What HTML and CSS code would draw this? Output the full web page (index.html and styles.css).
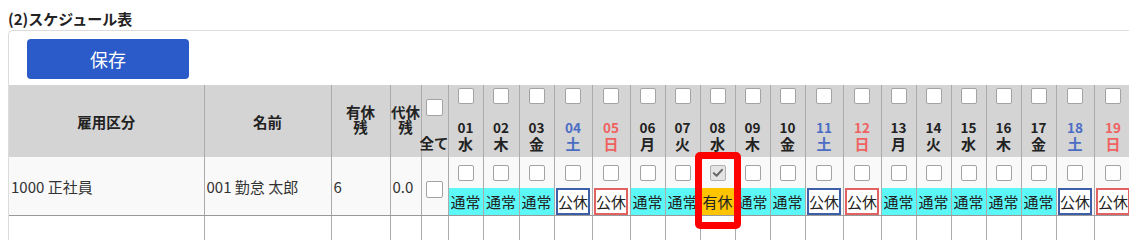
FILE: index.html
```html
<!DOCTYPE html>
<html lang="ja">
<head>
<meta charset="utf-8">
<title>スケジュール表</title>
<link rel="stylesheet" href="styles.css">
</head>
<body>
<h2 class="title">(2)スケジュール表</h2>
<div class="card">
  <div class="toolbar"><button class="btn-save" type="button">保存</button></div>
  <table class="sched">
    <colgroup>
      <col class="w-kbn"><col class="w-name"><col class="w-yk"><col class="w-dk"><col class="w-all">
      <col class="w35"><col class="w36"><col class="w35"><col class="w38"><col class="w38">
      <col class="w35"><col class="w35"><col class="w35"><col class="w35"><col class="w35">
      <col class="w38"><col class="w38"><col class="w35"><col class="w35"><col class="w35">
      <col class="w35"><col class="w35"><col class="w38"><col class="w38"><col class="w35"><col class="w35">
    </colgroup>
    <thead>
      <tr class="head">
        <th>雇用区分</th>
        <th>名前</th>
        <th class="two">有休<br>残</th>
        <th class="two">代休<br>残</th>
        <th class="allh"><div class="in"><span class="cb lg"></span><span class="allt">全て</span></div></th>
        <th class="dh"><div class="in"><span class="cb"></span><span class="num">01</span><span class="wd">水</span></div></th>
        <th class="dh"><div class="in"><span class="cb"></span><span class="num">02</span><span class="wd">木</span></div></th>
        <th class="dh"><div class="in"><span class="cb"></span><span class="num">03</span><span class="wd">金</span></div></th>
        <th class="dh sat"><div class="in"><span class="cb"></span><span class="num">04</span><span class="wd">土</span></div></th>
        <th class="dh sun"><div class="in"><span class="cb"></span><span class="num">05</span><span class="wd">日</span></div></th>
        <th class="dh"><div class="in"><span class="cb"></span><span class="num">06</span><span class="wd">月</span></div></th>
        <th class="dh"><div class="in"><span class="cb"></span><span class="num">07</span><span class="wd">火</span></div></th>
        <th class="dh"><div class="in"><span class="cb"></span><span class="num">08</span><span class="wd">水</span></div></th>
        <th class="dh"><div class="in"><span class="cb"></span><span class="num">09</span><span class="wd">木</span></div></th>
        <th class="dh"><div class="in"><span class="cb"></span><span class="num">10</span><span class="wd">金</span></div></th>
        <th class="dh sat"><div class="in"><span class="cb"></span><span class="num">11</span><span class="wd">土</span></div></th>
        <th class="dh sun"><div class="in"><span class="cb"></span><span class="num">12</span><span class="wd">日</span></div></th>
        <th class="dh"><div class="in"><span class="cb"></span><span class="num">13</span><span class="wd">月</span></div></th>
        <th class="dh"><div class="in"><span class="cb"></span><span class="num">14</span><span class="wd">火</span></div></th>
        <th class="dh"><div class="in"><span class="cb"></span><span class="num">15</span><span class="wd">水</span></div></th>
        <th class="dh"><div class="in"><span class="cb"></span><span class="num">16</span><span class="wd">木</span></div></th>
        <th class="dh"><div class="in"><span class="cb"></span><span class="num">17</span><span class="wd">金</span></div></th>
        <th class="dh sat"><div class="in"><span class="cb"></span><span class="num">18</span><span class="wd">土</span></div></th>
        <th class="dh sun"><div class="in"><span class="cb"></span><span class="num">19</span><span class="wd">日</span></div></th>
        <th class="dh"><div class="in"><span class="cb"></span><span class="num">20</span><span class="wd">月</span></div></th>
        <th class="dh"><div class="in"><span class="cb"></span><span class="num">21</span><span class="wd">火</span></div></th>
      </tr>
    </thead>
    <tbody>
      <tr class="row">
        <td class="txt">1000 正社員</td>
        <td class="txt">001 勤怠 太郎</td>
        <td class="txt">6</td>
        <td class="txt">0.0</td>
        <td class="allc"><span class="cb lg"></span></td>
        <td class="dc"><div class="in"><span class="cb"></span><span class="lbl nrm">通常</span></div></td>
        <td class="dc"><div class="in"><span class="cb"></span><span class="lbl nrm">通常</span></div></td>
        <td class="dc"><div class="in"><span class="cb"></span><span class="lbl nrm">通常</span></div></td>
        <td class="dc"><div class="in"><span class="cb"></span><span class="lbl hsat">公休</span></div></td>
        <td class="dc"><div class="in"><span class="cb"></span><span class="lbl hsun">公休</span></div></td>
        <td class="dc"><div class="in"><span class="cb"></span><span class="lbl nrm">通常</span></div></td>
        <td class="dc"><div class="in"><span class="cb"></span><span class="lbl nrm">通常</span></div></td>
        <td class="dc hl"><div class="in"><span class="cb on"><svg viewBox="0 0 16 16" width="14" height="14"><path d="M3.2 8.2 L6.4 11.2 L12.6 4.4" fill="none" stroke="#6a6a6a" stroke-width="2.4" stroke-linecap="round" stroke-linejoin="round"/></svg></span><span class="lbl paid">有休</span></div></td>
        <td class="dc"><div class="in"><span class="cb"></span><span class="lbl nrm">通常</span></div></td>
        <td class="dc"><div class="in"><span class="cb"></span><span class="lbl nrm">通常</span></div></td>
        <td class="dc"><div class="in"><span class="cb"></span><span class="lbl hsat">公休</span></div></td>
        <td class="dc"><div class="in"><span class="cb"></span><span class="lbl hsun">公休</span></div></td>
        <td class="dc"><div class="in"><span class="cb"></span><span class="lbl nrm">通常</span></div></td>
        <td class="dc"><div class="in"><span class="cb"></span><span class="lbl nrm">通常</span></div></td>
        <td class="dc"><div class="in"><span class="cb"></span><span class="lbl nrm">通常</span></div></td>
        <td class="dc"><div class="in"><span class="cb"></span><span class="lbl nrm">通常</span></div></td>
        <td class="dc"><div class="in"><span class="cb"></span><span class="lbl nrm">通常</span></div></td>
        <td class="dc"><div class="in"><span class="cb"></span><span class="lbl hsat">公休</span></div></td>
        <td class="dc"><div class="in"><span class="cb"></span><span class="lbl hsun">公休</span></div></td>
        <td class="dc"><div class="in"><span class="cb"></span><span class="lbl nrm">通常</span></div></td>
        <td class="dc"><div class="in"><span class="cb"></span><span class="lbl nrm">通常</span></div></td>
      </tr>
      <tr class="row2">
        <td></td><td></td><td></td><td></td><td></td>
        <td></td><td></td><td></td><td></td><td></td><td></td><td></td><td></td><td></td><td></td>
        <td></td><td></td><td></td><td></td><td></td><td></td><td></td><td></td><td></td><td></td><td></td>
      </tr>
    </tbody>
  </table>
</div>
</body>
</html>
```
FILE: styles.css
```css
html, body {
  background: #fff;
}
body {
  margin: 8px;
  font-family: "Noto Sans CJK JP", "Noto Sans", sans-serif;
  color: #222;
}
.title {
  margin: 0;
  height: 22px;
  font-size: 15px;
  line-height: 22px;
  font-weight: bold;
  color: #222;
}
.card {
  width: max-content;
  border: 1px solid #dcdcdc;
  border-right: 0;
  border-bottom: 0;
  border-radius: 5px 0 0 0;
}
.toolbar {
  padding: 8px 0 6px 18px;
}
.btn-save {
  display: block;
  width: 162px;
  height: 40px;
  padding: 0;
  border: 0;
  border-radius: 4px;
  background: #2a5bc9;
  color: #fff;
  font-family: "Noto Sans CJK JP", sans-serif;
  font-size: 18px;
}
.sched {
  border-collapse: collapse;
  table-layout: fixed;
  width: 1193px;
}
.w-kbn { width: 195px; }
.w-name { width: 127px; }
.w-yk { width: 59px; }
.w-dk { width: 31px; }
.w-all { width: 27px; }
.w35 { width: 35px; }
.w36 { width: 36px; }
.w38 { width: 38px; }

.sched th {
  height: 68px;
  padding: 0;
  background: #d4d4d4;
  border-left: 1px solid #ababab;
  border-right: 1px solid #ababab;
  font-size: 14.5px;
  font-weight: bold;
  color: #222;
  text-align: center;
  vertical-align: middle;
  white-space: nowrap;
}
.sched th:first-child,
.sched td:first-child {
  border-left: 0;
}
.sched th.two {
  line-height: 15px;
  padding-bottom: 4px;
}
.allh .in {
  display: flex;
  flex-direction: column;
  align-items: center;
  padding-top: 10px;
}
.allt {
  margin-top: 17px;
  line-height: 20px;
  margin-left: -1px;
}
.sched th.dh {
  vertical-align: top;
}
.dh .in {
  display: flex;
  flex-direction: column;
  align-items: center;
  height: 68px;
  box-sizing: border-box;
  padding: 3px 0 1px;
}
.dh .num {
  margin-top: auto;
  font-size: 13.5px;
  line-height: 15px;
}
.dh .wd {
  font-size: 15px;
  line-height: 17px;
}
.dh.sat { color: #4b6dc5; }
.dh.sun { color: #f06161; }

.cb {
  display: block;
  box-sizing: border-box;
  width: 16px;
  height: 16px;
  border: 1px solid #a3a3a3;
  border-radius: 2px;
  background: #fff;
}
.cb.lg {
  width: 17px;
  height: 17px;
}
.cb.on {
  display: flex;
  align-items: center;
  justify-content: center;
  background: #e4e4e4;
  border-color: #b0b0b0;
}

.row td {
  height: 57px;
  padding: 0;
  background: #f9f9f9;
  border-left: 1px solid #ababab;
  border-right: 1px solid #ababab;
  border-bottom: 1px solid #999;
  font-size: 15px;
  color: #333;
  vertical-align: middle;
  white-space: nowrap;
}
.row td.txt {
  padding-left: 2px;
  text-align: left;
}
.row td.allc .cb {
  margin: 6px auto 0 4px;
}
.row td.dc {
  vertical-align: top;
}
.dc .in {
  display: flex;
  flex-direction: column;
  align-items: center;
  padding-top: 8px;
  gap: 7px;
}
.lbl {
  display: block;
  box-sizing: border-box;
  width: 100%;
  height: 27px;
  border: 2px solid transparent;
  font-size: 15px;
  line-height: 23px;
  text-align: center;
  color: #222;
  white-space: nowrap;
  overflow: hidden;
}
.lbl.nrm {
  background: #5cf7f7;
  border-color: #5cf7f7;
}
.lbl.hsat {
  width: calc(100% - 3px);
  background: #fff;
  border-color: #3d5fa7;
}
.lbl.hsun {
  width: calc(100% - 3px);
  background: #fff;
  border-color: #e26262;
}
.lbl.paid {
  background: #ffc400;
  border-color: #ffc400;
}
.row td.hl {
  position: relative;
}
.row td.hl::after {
  content: "";
  position: absolute;
  left: -6px;
  right: -6px;
  top: -5px;
  bottom: -14px;
  border: 7px solid #ff0000;
  border-radius: 5px;
  z-index: 2;
  pointer-events: none;
}
.row2 td {
  height: 30px;
  padding: 0;
  background: #fff;
  border-left: 1px solid #ababab;
  border-right: 1px solid #ababab;
}
```
